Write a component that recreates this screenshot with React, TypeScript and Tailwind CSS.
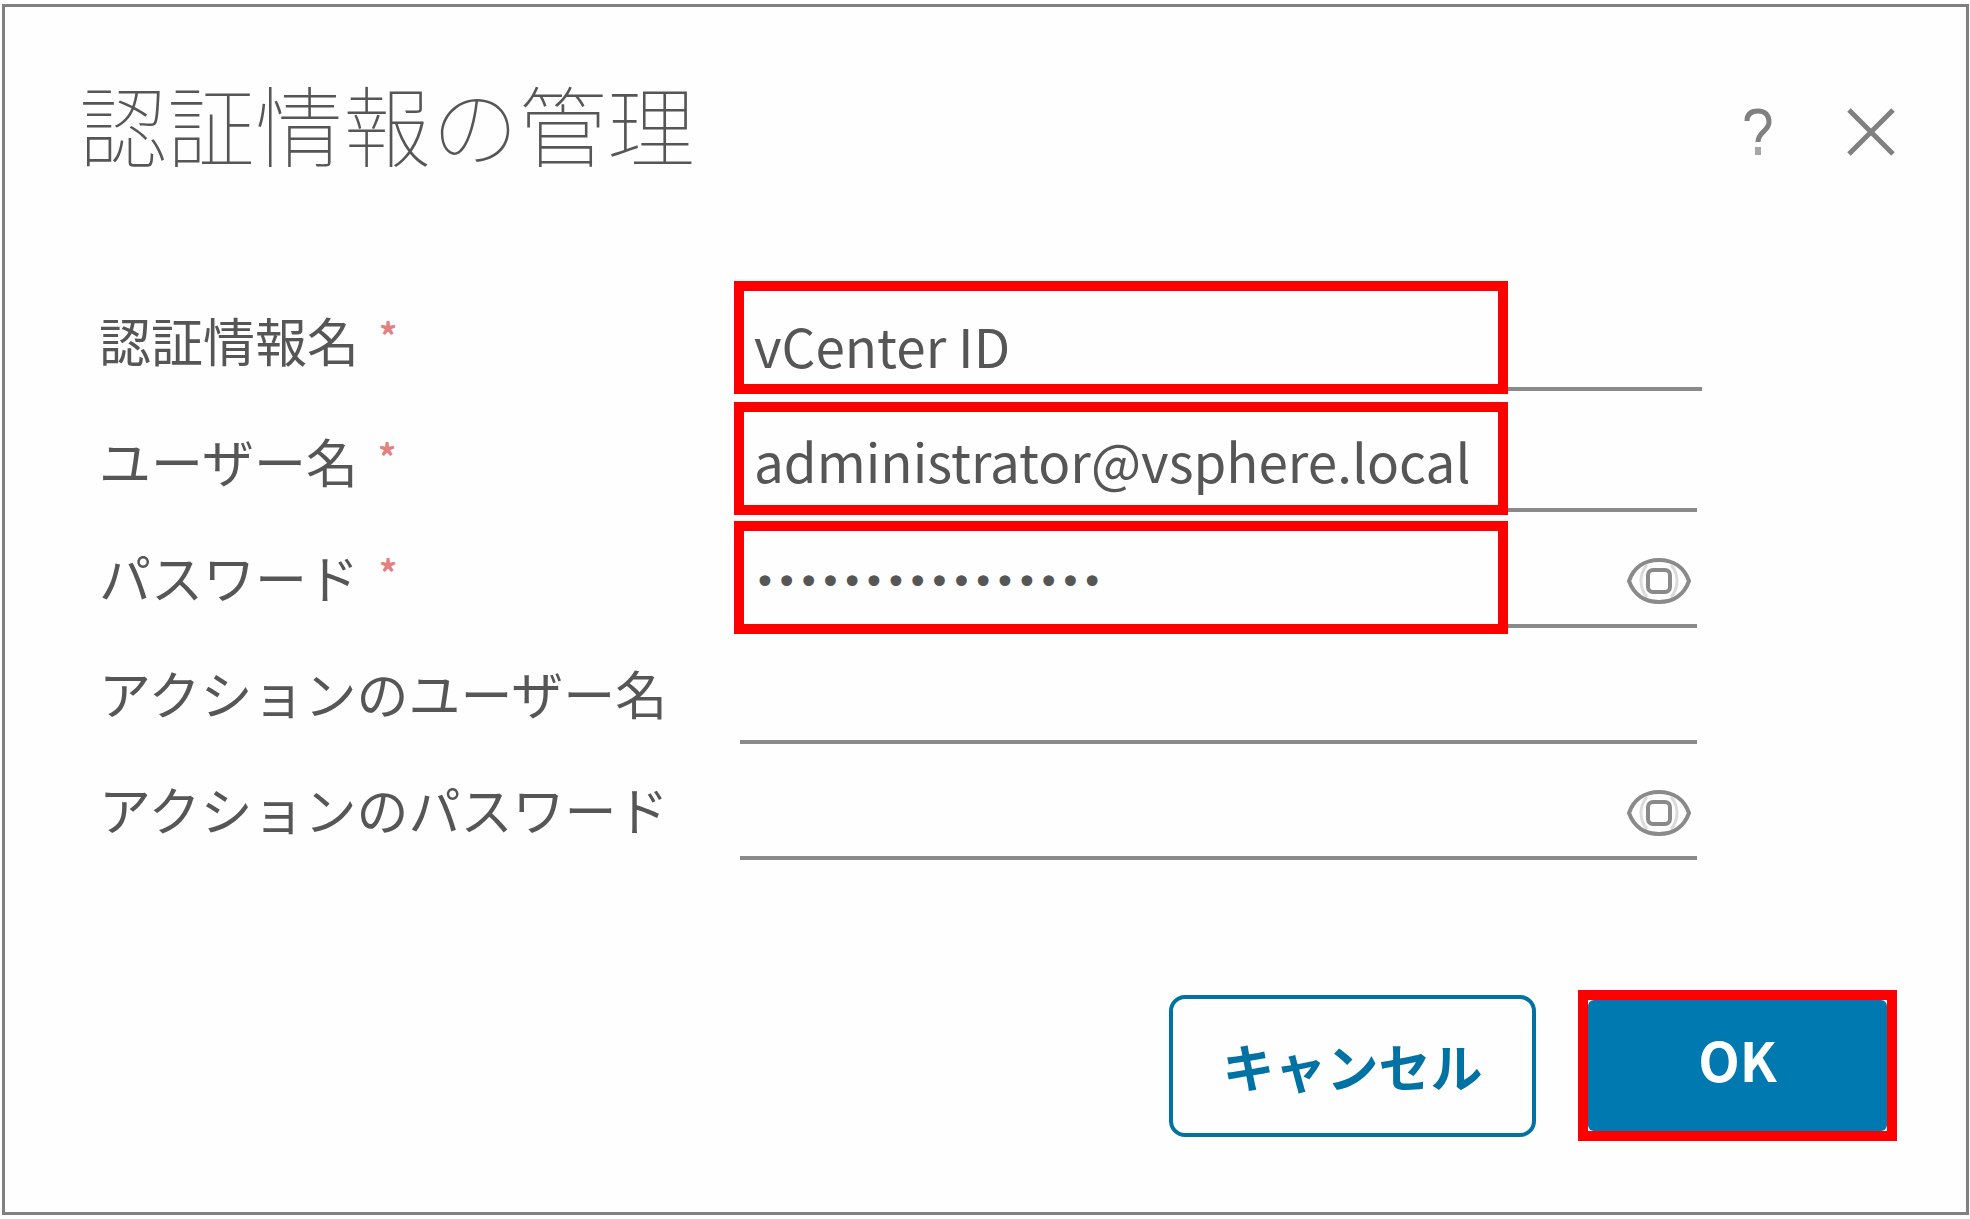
import React, { useState } from 'react';
import clsx from 'clsx';

interface FieldProps {
  id: string;
  label: string;
  value: string;
  onChange: (value: string) => void;
  required?: boolean;
  secret?: boolean;
  wide?: boolean;
  highlighted?: boolean;
}

const EyeIcon: React.FC<{ className?: string }> = ({ className }) => (
  <svg viewBox="0 0 68 48" fill="none" stroke="currentColor" className={className} aria-hidden="true">
    <path d="M4 24C9 10 20 3 34 3s25 7 30 21C59 38 48 45 34 45S9 38 4 24Z" strokeWidth="4" />
    <path d="M22 8c-8 9-8 23 0 32M46 8c8 9 8 23 0 32" strokeWidth="3" opacity="0.3" />
    <rect x="23" y="13" width="22" height="22" rx="5" strokeWidth="4" />
  </svg>
);

const HelpIcon: React.FC<{ className?: string }> = ({ className }) => (
  <svg viewBox="0 0 30 50" fill="none" stroke="currentColor" className={className} aria-hidden="true">
    <path d="M4 14C4 7 8 4 15 4s11 4 11 11c0 9-11 10-11 20" strokeWidth="5" />
    <path d="M15 40v8" strokeWidth="6" opacity="0.7" />
  </svg>
);

const CloseIcon: React.FC<{ className?: string }> = ({ className }) => (
  <svg viewBox="0 0 48 48" fill="none" stroke="currentColor" className={className} aria-hidden="true">
    <path d="M2 2l44 44M46 2L2 46" strokeWidth="5" />
  </svg>
);

const Field: React.FC<FieldProps> = ({ id, label, value, onChange, required, secret, wide, highlighted }) => {
  const [visible, setVisible] = useState(false);
  const masked = secret && !visible;

  return (
    <div className="flex h-[116px]">
      <label htmlFor={id} className="w-[641px] shrink-0 pt-[27px] text-[52px] leading-[76px] whitespace-nowrap">
        {label}
        {required && <span className="ml-5 align-[12px] text-[36px] leading-none font-bold text-[#e58080]">*</span>}
      </label>
      <div className={clsx('relative flex min-w-0 flex-1 items-center border-b-4 border-[#8a8a8a]', wide && '-mr-[5px]')}>
        <input
          id={id}
          type={masked ? 'password' : 'text'}
          value={value}
          onChange={(e) => onChange(e.target.value)}
          autoComplete="off"
          className={clsx(
            'h-full min-w-0 flex-1 bg-transparent pl-[14px] outline-none',
            masked ? "font-['DejaVu_Sans',sans-serif] text-[37px]" : 'text-[53px]',
            wide || secret ? 'pt-[28px]' : 'pt-[16px]'
          )}
        />
        {secret && (
          <button type="button" aria-label="表示" onClick={() => setVisible(!visible)} className="mt-[26px] mr-1 text-[#8a8a8a]">
            <EyeIcon className="h-[48px] w-[68px]" />
          </button>
        )}
        {highlighted && (
          <span
            className={clsx(
              'pointer-events-none absolute -left-[6px] h-[113px] w-[774px] border-10 border-[#ff0000]',
              secret ? '-bottom-[10px]' : '-bottom-[7px]'
            )}
          />
        )}
      </div>
    </div>
  );
};

export default function App() {
  const [name, setName] = useState('vCenter ID');
  const [userName, setUserName] = useState('administrator@vsphere.local');
  const [password, setPassword] = useState('abcdefghijklmnop');
  const [actionUser, setActionUser] = useState('');
  const [actionPassword, setActionPassword] = useState('');

  return (
    <div className="min-h-screen bg-white pt-1 pr-px pb-1 pl-[2px] font-['Noto_Sans_CJK_JP',sans-serif] text-[#565656]">
      <div role="dialog" aria-labelledby="title" className="border-3 border-[#808080] bg-[#fefefe] pr-[69px] pb-[71px] pl-[74px]">
        <header className="flex items-center justify-between pt-[49px]">
          <h1 id="title" className="text-[88px] leading-[132px] font-thin">認証情報の管理</h1>
          <div className="mt-5 mr-[2px] flex items-center gap-[74px] text-[#808080]">
            <button type="button" aria-label="ヘルプ">
              <HelpIcon className="h-[50px] w-[30px]" />
            </button>
            <button type="button" aria-label="閉じる">
              <CloseIcon className="h-[48px] w-[48px]" />
            </button>
          </div>
        </header>

        <form className="mt-[87px]" onSubmit={(e) => e.preventDefault()}>
          <div className="mr-[200px] ml-[20px]">
            <div className="mb-[5px]">
              <Field id="name" label="認証情報名" value={name} onChange={setName} required wide highlighted />
            </div>
            <Field id="user" label="ユーザー名" value={userName} onChange={setUserName} required highlighted />
            <Field id="password" label="パスワード" value={password} onChange={setPassword} required secret highlighted />
            <Field id="action-user" label="アクションのユーザー名" value={actionUser} onChange={setActionUser} />
            <Field id="action-password" label="アクションのパスワード" value={actionPassword} onChange={setActionPassword} secret />
          </div>

          <div className="mt-[130px] flex items-center justify-end gap-[42px]">
            <button type="button" className="h-[142px] w-[367px] rounded-[16px] border-4 border-[#0072a3] text-[52px] font-bold text-[#0072a3]">
              キャンセル
            </button>
            <div className="border-10 border-[#ff0000] bg-white">
              <button type="submit" className="block h-[131px] w-[299px] rounded-[6px] bg-[#0079b0] pb-[14px] text-[54px] font-bold text-white">
                OK
              </button>
            </div>
          </div>
        </form>
      </div>
    </div>
  );
}
